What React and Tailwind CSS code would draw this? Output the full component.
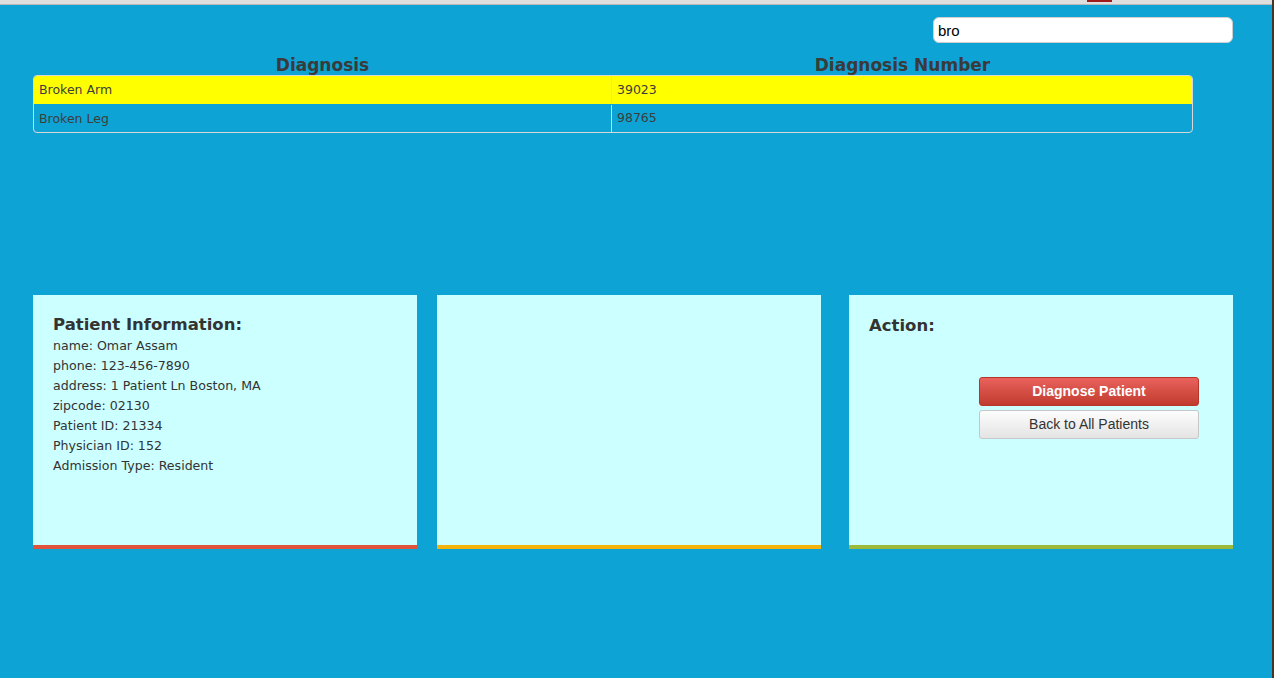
import React from "react";

const sans = { fontFamily: '"DejaVu Sans", "Lucida Grande", sans-serif' };

export default function App() {
  return (
    <div className="flex h-[678px] w-[1274px] overflow-hidden bg-[#0da3d4]">
      <div className="flex flex-1 flex-col">
        <div className="relative h-[5px] border-b border-[#b9b9b9] bg-[#dedede]">
          <div className="absolute left-[1087px] top-0 h-[2px] w-[25px] bg-[#9e1a1a]" />
        </div>
        <div className="flex flex-col pl-[33px] pr-[39px]" style={sans}>
          <div className="mt-[12px] flex justify-end">
            <input
              readOnly
              value="bro"
              className="h-[26px] w-[300px] rounded-[6px] border border-[#cfcfcf] bg-white px-[4px] text-[15px] text-black outline-none"
              style={{ fontFamily: '"Liberation Sans", Arial, sans-serif' }}
            />
          </div>
          <div className="mt-[13px] w-[1160px]">
            <div className="grid h-[19px] grid-cols-[579px_581px] items-center text-[17px] font-bold leading-none text-[#3a3a3a]">
              <div className="text-center">Diagnosis</div>
              <div className="text-center">Diagnosis Number</div>
            </div>
            <div className="overflow-hidden rounded-[4px] border border-[#d8d8d8] text-[12.5px] text-[#3d3d3d]">
              <div className="grid h-[28px] grid-cols-[578px_1fr] items-center bg-[#ffff00]">
                <div className="h-full border-r border-[#d8d8d8] pl-[5px] leading-[28px]">Broken Arm</div>
                <div className="pl-[5px]">39023</div>
              </div>
              <div className="grid h-[28px] grid-cols-[578px_1fr] items-center border-t border-[#0da3d4]">
                <div className="h-full border-r border-[#d8d8d8] pl-[5px] leading-[27px]">Broken Leg</div>
                <div className="pl-[5px]">98765</div>
              </div>
            </div>
          </div>
          <div className="mt-[162px] flex">
            <div className="flex h-[254px] w-[384px] flex-col border-b-4 border-[#e1543c] bg-[#ccffff] px-[20px] pt-[19px] text-[#333]">
              <div className="text-[16.5px] font-bold leading-[22px]">Patient Information:</div>
              <div className="text-[12.6px] leading-[20px]">
                <div>name: Omar Assam</div>
                <div>phone: 123-456-7890</div>
                <div>address: 1 Patient Ln Boston, MA</div>
                <div>zipcode: 02130</div>
                <div>Patient ID: 21334</div>
                <div>Physician ID: 152</div>
                <div>Admission Type: Resident</div>
              </div>
            </div>
            <div className="ml-[20px] h-[254px] w-[384px] border-b-4 border-[#f4b30c] bg-[#ccffff]" />
            <div className="ml-[28px] flex h-[254px] w-[384px] flex-col border-b-4 border-[#9cb93b] bg-[#ccffff] px-[20px] pt-[20px] text-[#333]">
              <div className="text-[16.5px] font-bold leading-[22px]">Action:</div>
              <div
                className="ml-[110px] mt-[40px] flex w-[220px] flex-col gap-[4px] text-[14px]"
                style={{ fontFamily: '"Liberation Sans", Arial, sans-serif' }}
              >
                <button className="h-[29px] rounded-[3px] border border-[#b8352b] bg-gradient-to-b from-[#e9625c] to-[#c23a2e] font-bold text-white">
                  Diagnose Patient
                </button>
                <button className="h-[29px] rounded-[3px] border border-[#c7c7c7] bg-gradient-to-b from-[#fdfdfd] to-[#e4e4e4] text-[#333]">
                  Back to All Patients
                </button>
              </div>
            </div>
          </div>
        </div>
      </div>
      <div className="w-[2px] bg-[#4a3522]" />
    </div>
  );
}
